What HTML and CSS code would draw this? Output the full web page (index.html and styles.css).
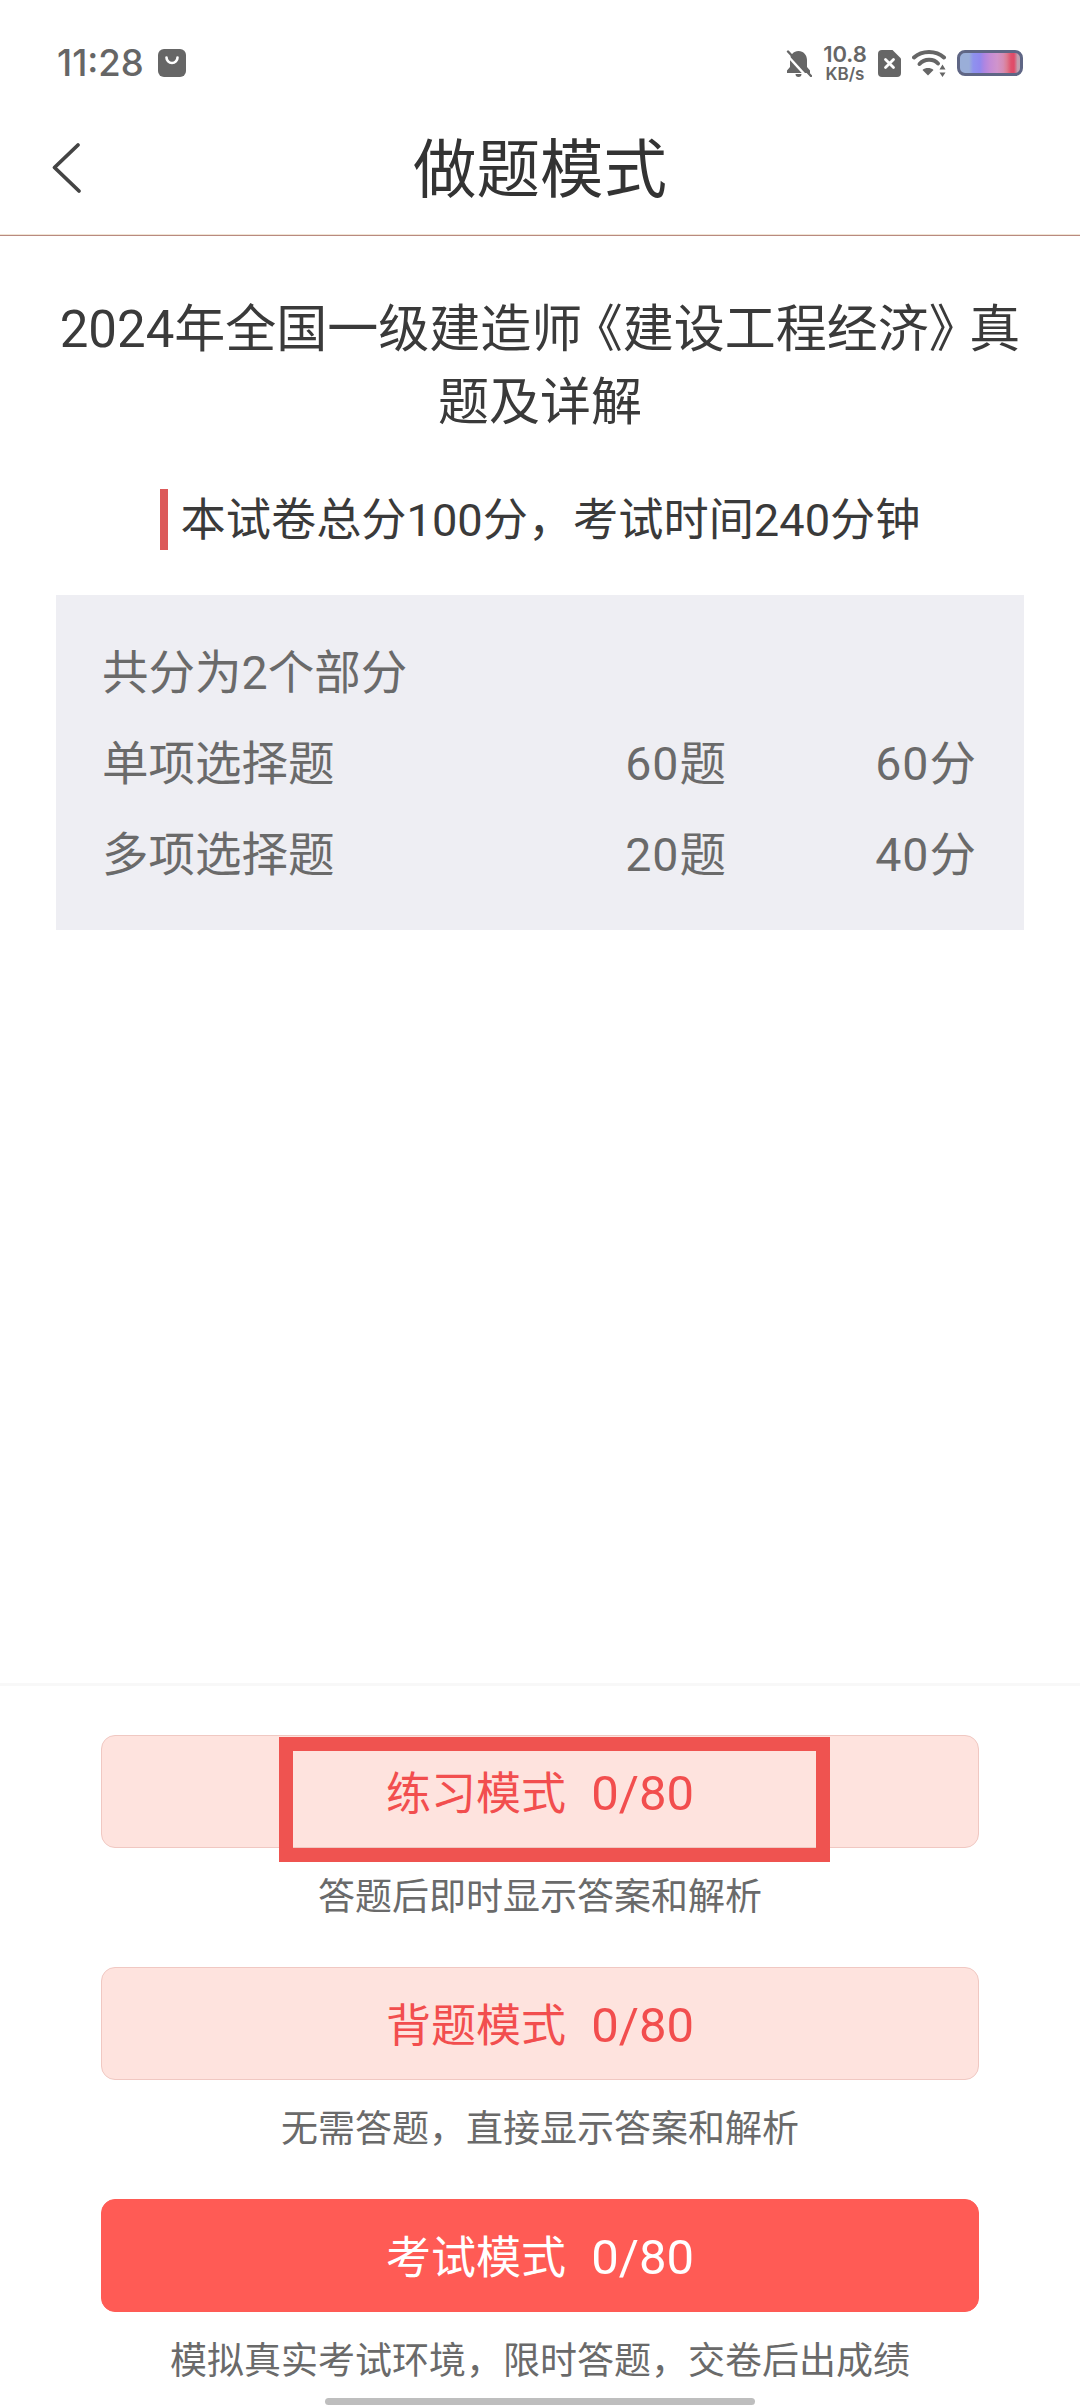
FILE: index.html
```html
<!DOCTYPE html>
<html lang="zh-CN">
<head>
    <link rel="stylesheet" href="styles.css">
    <meta charset="UTF-8">
    <meta name="viewport" content="width=device-width, initial-scale=1.0">
    <title>做题模式</title>
</head>
<body>
    <div class="page">
        <!-- Status Bar -->
        <div class="status">
            <div class="status-left">
                <span class="time">11:28</span>
                <svg class="bag" width="28" height="28" viewBox="0 0 28 28">
                    <rect width="28" height="28" rx="6" fill="#666"/>
                    <path d="M8.500 8.500a5.500 5.500 0 0 0 11 0" fill="none" stroke="#fff" stroke-width="2.600" stroke-linecap="round"/>
                </svg>
            </div>
            <div class="status-right">
                <svg width="26" height="27" viewBox="0 0 26 27">
                    <path d="M12.500 1C7.500 1 4 5 4 10v7L1 20.500V23H24V20.500L21 17V10C21 5 17.500 1 12.500 1zM9.500 24h6a3 3 0 0 1-6 0z" fill="#666"/>
                    <path d="M0 4L21 27" stroke="#fff" stroke-width="2.500"/>
                    <path d="M2 1.500L25 26" stroke="#666" stroke-width="2.400" stroke-linecap="round"/>
                </svg>
                <div class="speed"><span class="speed-num">10.8</span><span class="speed-unit">KB/s</span></div>
                <svg width="23" height="27" viewBox="0 0 23 27">
                    <path d="M4 0h10.500L23 8.500V23a4 4 0 0 1-4 4H4a4 4 0 0 1-4-4V4a4 4 0 0 1 4-4z" fill="#666"/>
                    <path d="M7.500 9.500l8 8M15.500 9.500l-8 8" stroke="#fff" stroke-width="2.800" stroke-linecap="round"/>
                </svg>
                <svg class="wifi" width="35" height="28" viewBox="0 0 35 28">
                    <path d="M2 8.500C10 1 24 1 32 8.500" fill="none" stroke="#666" stroke-width="4" stroke-linecap="round"/>
                    <path d="M7.500 15C12.500 9.500 21.500 9.500 26 14.500" fill="none" stroke="#666" stroke-width="4" stroke-linecap="round"/>
                    <path d="M10.500 21c3-2.600 8-2.600 11 0L16 26.500z" fill="#666"/>
                    <path d="M27.500 20.500l3-5 3 5zM27.500 23.500h6l-3 4.500z" fill="#666"/>
                </svg>
                <div class="battery"></div>
            </div>
        </div>

        <!-- Header -->
        <div class="header">
            <svg class="back" width="32" height="52" viewBox="0 0 32 52">
                <path d="M28 3L4.500 25.500 29 49" fill="none" stroke="#444" stroke-width="3.800" stroke-linecap="round" stroke-linejoin="round"/>
            </svg>
            <h1>做题模式</h1>
        </div>

        <!-- Paper Info -->
        <div class="content">
            <h2 class="paper-title">
                <span class="title-line">2024年全国一级建造师<span class="book-open">《</span>建设工程经济<span class="book-close">》</span>真</span>
                <span class="title-line">题及详解</span>
            </h2>
            <div class="paper-sub"><span class="paper-sub-text">本试卷总分100分，考试时间240分钟</span></div>
            <div class="parts">
                <p>共分为2个部分</p>
                <div class="part-row">
                    <span class="part-name">单项选择题</span>
                    <span class="part-count">60题</span>
                    <span class="part-score">60分</span>
                </div>
                <div class="part-row">
                    <span class="part-name">多项选择题</span>
                    <span class="part-count">20题</span>
                    <span class="part-score">40分</span>
                </div>
            </div>
        </div>

        <!-- Mode Buttons -->
        <div class="footer">
            <div class="mode">
                <button class="mode-btn">练习模式&nbsp;&nbsp;<span class="mode-count">0/80</span></button>
                <div class="highlight"></div>
                <p class="mode-desc">答题后即时显示答案和解析</p>
            </div>
            <div class="mode">
                <button class="mode-btn">背题模式&nbsp;&nbsp;<span class="mode-count">0/80</span></button>
                <p class="mode-desc">无需答题，直接显示答案和解析</p>
            </div>
            <div class="mode">
                <button class="mode-btn solid">考试模式&nbsp;&nbsp;<span class="mode-count">0/80</span></button>
                <p class="mode-desc">模拟真实考试环境，限时答题，交卷后出成绩</p>
            </div>
        </div>
        <div class="home-bar"></div>
    </div>
</body>
</html>
```
FILE: styles.css
```css
/* General Reset */
body {
    margin: 0;
    padding: 0;
    background-color: #fff;
    font-family: Roboto, "Noto Sans CJK SC", sans-serif;
}

p, h1, h2 {
    margin: 0;
    font-weight: normal;
}

.page {
    position: relative;
    height: 2408px;
    display: flex;
    flex-direction: column;
    overflow: hidden;
}

/* Status Bar */
.status {
    height: 84px;
    padding: 42px 57px 0;
    display: flex;
    justify-content: space-between;
    align-items: center;
    box-sizing: border-box;
    flex-shrink: 0;
}

.status-left {
    display: flex;
    align-items: center;
    gap: 14px;
}

.time {
    font-family: Inter, sans-serif;
    font-size: 36.500px;
    font-weight: 500;
    color: #666;
}

.status-right {
    display: flex;
    align-items: center;
    gap: 11px;
}

.speed {
    display: flex;
    flex-direction: column;
    align-items: center;
    color: #666;
    font-family: Inter, sans-serif;
    font-weight: 600;
    width: 44px;
}

.speed-num {
    font-size: 22px;
    line-height: 21px;
}

.speed-unit {
    font-size: 17px;
    line-height: 17px;
    margin-top: 1px;
}

.battery {
    width: 66px;
    height: 26px;
    margin-left: -1px;
    box-sizing: border-box;
    border: 3px solid #5f6685;
    border-radius: 8px;
    background: linear-gradient(90deg, #9aaed8 0%, #9aaed8 15%, #8f92ee 22%, #9088ee 33%, #ad85e2 40%, #c48cd6 50%, #d094cc 62%, #d68cb4 72%, #dc7c92 78%, #e0506c 85%, #e04a68 90%, #c0a0b0 96%);
}

/* Header */
.header {
    position: relative;
    height: 142px;
    padding-top: 9px;
    display: flex;
    align-items: center;
    justify-content: center;
    border-bottom: 1px solid #b98a80;
    box-shadow: inset 0 -1px 0 #f0e4d4;
    flex-shrink: 0;
}

.header h1 {
    font-size: 63.500px;
    color: #333;
}

.back {
    position: absolute;
    left: 50px;
    top: 58px;
}

/* Paper Info */
.content {
    flex: 1;
    padding: 0 56px;
}

.paper-title {
    margin-top: 57px;
    font-size: 51px;
    line-height: 73px;
    color: #3a3a3a;
    text-align: center;
}

.title-line {
    display: block;
    white-space: nowrap;
}

/* half-width book-title marks, as the reference sets them tighter */
.book-open {
    font-feature-settings: "halt";
    margin-left: 15px;
}

.book-close {
    font-feature-settings: "halt";
    margin-right: 15px;
}

.paper-sub {
    margin-top: 50px;
    display: flex;
    justify-content: center;
}

.paper-sub-text {
    border-left: 8px solid #dc5a5a;
    padding: 3px 0 0 13px;
    font-size: 45.200px;
    line-height: 58px;
    color: #3a3a3a;
}

.parts {
    margin-top: 45px;
    height: 335px;
    box-sizing: border-box;
    padding: 46px 47px 0 46px;
    background-color: #eeeef3;
    font-size: 46.500px;
    line-height: 64px;
    color: #6a6a6a;
}

.part-row {
    display: flex;
    margin-top: 27px;
}

.part-name {
    flex: 1;
}

.part-count {
    letter-spacing: 1px;
}

.part-score {
    width: 250px;
    letter-spacing: 1px;
    text-align: right;
}

/* Mode Buttons */
.footer {
    height: 725px;
    box-sizing: border-box;
    padding: 49px 101px 0;
    border-top: 3px solid #f8f8f8;
    flex-shrink: 0;
}

.mode {
    position: relative;
    height: 232px;
}

.mode-btn {
    display: block;
    width: 100%;
    height: 113px;
    padding: 0 0 3px;
    border: 1px solid #f0c8c2;
    border-radius: 14px;
    background-color: #fee3de;
    color: #f24e4e;
    font-family: inherit;
    font-size: 45px;
}

.mode-count {
    margin-left: 3px;
    font-size: 49px;
}

.mode-btn.solid {
    background-color: #ff5b55;
    border-color: #ff5b55;
    color: #fff;
}

.mode-desc {
    margin-top: 25px;
    font-size: 37px;
    line-height: 50px;
    color: #6a6a6a;
    text-align: center;
}

/* Annotation box over the first button */
.highlight {
    position: absolute;
    left: 178px;
    top: 2px;
    width: 551px;
    height: 125px;
    box-sizing: border-box;
    border: 14px solid #ef5350;
}

.home-bar {
    position: absolute;
    left: 325px;
    bottom: 3px;
    width: 430px;
    height: 7px;
    border-radius: 4px;
    background-color: #bebebe;
}
```
